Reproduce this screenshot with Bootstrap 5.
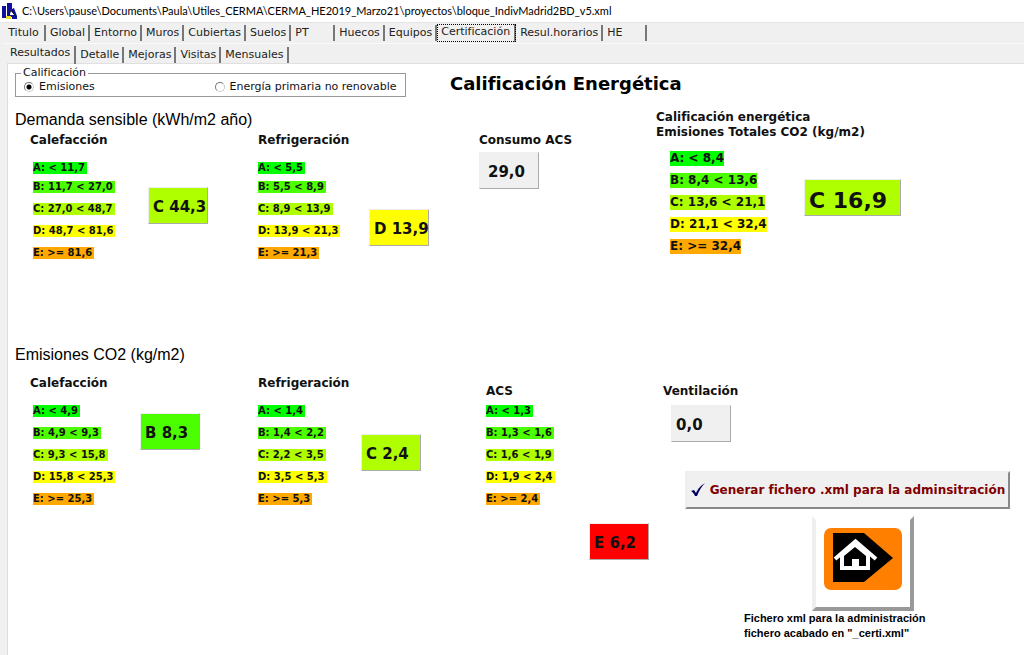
<!DOCTYPE html>
<html lang="es">
<head>
<meta charset="utf-8">
<meta name="viewport" content="width=device-width, initial-scale=1">
<title>CERMA - Certificación</title>
<link href="https://cdn.jsdelivr.net/npm/bootstrap@5.3.0/dist/css/bootstrap.min.css" rel="stylesheet">
<style>
  body { font-family: "DejaVu Sans", Verdana, sans-serif; font-size: 11px; line-height: 14px; color: #111; background: #f0f0f0; }
  .titlebar { height: 22px; background: #fff; font-family: "Lato", "Open Sans", sans-serif; font-size: 11px; color: #000; padding-left: 2px; }
  .tabstrip .tab-btn { border: 0; border-right: 2px solid #777; background: none; height: 16px; padding: 0 3px 0 4px; color: #222; line-height: 14px; white-space: nowrap; }
  .tabs-main { height: 21px; padding: 0 0 0 2px; border-top: 1px solid #e4e4e4; }
  .tabs-sub { height: 20px; margin-left: 4px; border-top: 1px solid #fafafa; padding-top: 2px; }
  .tabstrip .tab-first { min-width: 44px; }
  .tabstrip .tab-wide { min-width: 44px; text-align: left; }
  .tabstrip .tab-on { outline: 1px dotted #000; outline-offset: -1px; height: 18px; padding: 0 4px 3px 4px; }
  .tabstrip .tab-sel { height: 18px; padding: 0 4px 4px 6px; }
  .sheet { margin-left: 7px; background: #fff; border-top: 1px solid #e0e0e0; border-left: 1px solid #ddd; min-height: calc(100vh - 63px); padding-left: 7px; }
  .options { width: 391px; height: 31px; margin-top: 3px; }
  .options fieldset { border: 1px solid #999; height: 30px; padding: 0 8px; }
  .options legend { float: none; width: auto; font-size: 11px; line-height: 12px; margin: 0 0 0 -3px; padding: 0 2px; }
  .options .choice { height: 16px; }
  .options input { appearance: none; width: 10px; height: 10px; margin: 0 5px 0 0; border: 1px solid; border-color: #777 #ccc #ccc #777; border-radius: 50%; background: #fff; }
  .options input:checked { background: radial-gradient(circle, #000 0 2px, #fff 3px); }
  .main-title { font-size: 18px; line-height: 22px; font-weight: bold; color: #000; margin: 9px 0 0 44px; }
  .rating-grid { display: grid; grid-template-rows: auto 1fr; }
  .grid-demand { grid-template-columns: 243fr 221fr 177fr 368fr; min-height: 235px; margin-top: 12px; }
  .grid-emission { grid-template-columns: 243fr 228fr 177fr 361fr; }
  .section-title { grid-column: 1 / 4; font-family: "Liberation Sans", Arial, sans-serif; font-size: 16px; line-height: 20px; font-weight: normal; margin: 0; color: #000; }
  .total { grid-column: 4; grid-row: 1 / 3; }
  .grid-demand .section-title { margin-bottom: 3px; }
  .grid-emission .section-title { grid-column: 1 / -1; margin-bottom: 11px; }
  .indent { padding-left: 15px; }
  .group-title { font-size: 12px; line-height: 15px; font-weight: bold; margin: 0; }
  .scale { list-style: none; margin: 14px 0 0; padding: 0; font-size: 10px; font-weight: bold; line-height: 12px; width: 103px; flex: none; }
  .scale li { height: 22px; }
  .scale span { display: inline-block; white-space: nowrap; padding-right: 2px; }
  .scale.big { font-size: 12px; line-height: 15px; width: 118px; margin-top: 11px; }
  .scale.big span { padding-right: 0; }
  .scale.tight li:first-child { height: 19px; }
  .scale.near { margin-top: 6px; }
  .inset { padding-left: 3px; }
  .inset-total { padding-left: 14px; }
  .lv-a { background: #00ff00; } .lv-b { background: #4cff00; } .lv-c { background: #b0ff00; } .lv-d { background: #ffff00; } .lv-e { background: #ffa800; } .lv-g { background: #ff0000; }
  .result { width: 60px; height: 37px; flex: none; padding: 3px 0 0 4px; display: flex; align-items: center; font-size: 15px; font-weight: bold; white-space: nowrap; border: 1px solid; border-color: #eee #aaa #aaa #eee; }
  .result.large { width: 97px; font-size: 22px; padding-top: 7px; }
  .plain { background: #f0f0f0; }
  .raised { background: #f0f0f0; border: 2px solid; border-color: #eee #888 #888 #eee; }
  .export { width: 325px; height: 38px; font-size: 12px; font-weight: bold; color: #800000; padding: 0; margin: 29px 0 0 22px; white-space: nowrap; }
  .house { width: 102px; height: 95px; background: #fff; border: 4px solid; border-color: #fff #999 #999 #eee; padding: 0 0 10px; margin: 7px 0 0 149px; }
  .note { font-family: "Liberation Sans", Arial, sans-serif; font-size: 11px; line-height: 15px; font-weight: bold; margin: 0 0 0 81px; color: #000; }
  .gap-wide { margin-left: 12px; }
  .drop-near { margin-top: 6px; }
  .drop-b { margin-top: 22px; } .drop-c { margin-top: 39px; } .drop-c2 { margin-top: 43px; } .drop-d { margin-top: 61px; } .drop-g { margin-top: 124px; }
</style>
</head>
<body>
<header class="titlebar d-flex align-items-center">
  <svg width="16" height="18" viewBox="0 0 16 18" class="me-1 flex-shrink-0" aria-hidden="true"><path fill="#1010a0" d="M0 4h4v12H0zM5 1h5v14H5zM10 7l2-1 3 8v3h-5z"/><path fill="#fff" d="M8 8l5 5H8z"/><path stroke="#111" fill="none" d="M7 13l2-5 5 7"/><path fill="#e8dc20" d="M4 14h5v3H4z"/></svg>
  <span>C:\Users\pause\Documents\Paula\Utiles_CERMA\CERMA_HE2019_Marzo21\proyectos\bloque_IndivMadrid2BD_v5.xml</span>
</header>
<nav class="tabstrip tabs-main d-flex align-items-center" aria-label="Secciones">
  <button class="tab-btn tab-first">Titulo</button><button class="tab-btn">Global</button><button class="tab-btn">Entorno</button><button class="tab-btn">Muros</button><button class="tab-btn">Cubiertas</button><button class="tab-btn">Suelos</button><button class="tab-btn tab-wide">PT</button><button class="tab-btn">Huecos</button><button class="tab-btn">Equipos</button><button class="tab-btn tab-on" aria-current="page">Certificación</button><button class="tab-btn">Resul.horarios</button><button class="tab-btn tab-wide">HE</button>
</nav>
<nav class="tabstrip tabs-sub d-flex align-items-center" aria-label="Certificación">
  <button class="tab-btn tab-sel" aria-current="page">Resultados</button><button class="tab-btn">Detalle</button><button class="tab-btn">Mejoras</button><button class="tab-btn">Visitas</button><button class="tab-btn">Mensuales</button>
</nav>
<main class="sheet">
  <div class="d-flex align-items-start">
    <form class="options flex-shrink-0">
      <fieldset>
        <legend>Calificación</legend>
        <div class="choice d-flex">
          <label class="d-flex align-items-center col-6"><input type="radio" name="cal" checked>Emisiones</label>
          <label class="d-flex align-items-center text-nowrap ms-1"><input type="radio" name="cal">Energía primaria no renovable</label>
        </div>
      </fieldset>
    </form>
    <h1 class="main-title">Calificación Energética</h1>
  </div>

  <section class="rating-grid grid-demand">
    <h2 class="section-title">Demanda sensible (kWh/m2 año)</h2>
    <div class="indent">
      <h3 class="group-title">Calefacción</h3>
      <div class="d-flex inset">
        <ul class="scale tight"><li><span class="lv-a">A: &lt; 11,7</span></li><li><span class="lv-b">B: 11,7 &lt; 27,0</span></li><li><span class="lv-c">C: 27,0 &lt; 48,7</span></li><li><span class="lv-d">D: 48,7 &lt; 81,6</span></li><li><span class="lv-e">E: &gt;= 81,6</span></li></ul>
        <output class="result lv-c drop-c gap-wide">C 44,3</output>
      </div>
    </div>
    <div>
      <h3 class="group-title">Refrigeración</h3>
      <div class="d-flex">
        <ul class="scale tight"><li><span class="lv-a">A: &lt; 5,5</span></li><li><span class="lv-b">B: 5,5 &lt; 8,9</span></li><li><span class="lv-c">C: 8,9 &lt; 13,9</span></li><li><span class="lv-d">D: 13,9 &lt; 21,3</span></li><li><span class="lv-e">E: &gt;= 21,3</span></li></ul>
        <output class="result lv-d drop-d ms-2">D 13,9</output>
      </div>
    </div>
    <div>
      <h3 class="group-title">Consumo ACS</h3>
      <output class="result plain mt-1 ps-2">29,0</output>
    </div>
    <div class="total">
      <h3 class="group-title">Calificación energética<br>Emisiones Totales CO2 (kg/m2)</h3>
      <div class="d-flex inset-total">
        <ul class="scale big"><li><span class="lv-a">A: &lt; 8,4</span></li><li><span class="lv-b">B: 8,4 &lt; 13,6</span></li><li><span class="lv-c">C: 13,6 &lt; 21,1</span></li><li><span class="lv-d">D: 21,1 &lt; 32,4</span></li><li><span class="lv-e">E: &gt;= 32,4</span></li></ul>
        <output class="result large lv-c drop-c ms-3">C 16,9</output>
      </div>
    </div>
  </section>

  <section class="rating-grid grid-emission">
    <h2 class="section-title">Emisiones CO2 (kg/m2)</h2>
    <div class="indent">
      <h3 class="group-title">Calefacción</h3>
      <div class="d-flex inset">
        <ul class="scale"><li><span class="lv-a">A: &lt; 4,9</span></li><li><span class="lv-b">B: 4,9 &lt; 9,3</span></li><li><span class="lv-c">C: 9,3 &lt; 15,8</span></li><li><span class="lv-d">D: 15,8 &lt; 25,3</span></li><li><span class="lv-e">E: &gt;= 25,3</span></li></ul>
        <output class="result lv-b drop-b ms-1">B 8,3</output>
      </div>
    </div>
    <div>
      <h3 class="group-title">Refrigeración</h3>
      <div class="d-flex">
        <ul class="scale"><li><span class="lv-a">A: &lt; 1,4</span></li><li><span class="lv-b">B: 1,4 &lt; 2,2</span></li><li><span class="lv-c">C: 2,2 &lt; 3,5</span></li><li><span class="lv-d">D: 3,5 &lt; 5,3</span></li><li><span class="lv-e">E: &gt;= 5,3</span></li></ul>
        <output class="result lv-c drop-c2">C 2,4</output>
      </div>
    </div>
    <div class="pt-2">
      <h3 class="group-title">ACS</h3>
      <div class="d-flex">
        <ul class="scale near"><li><span class="lv-a">A: &lt; 1,3</span></li><li><span class="lv-b">B: 1,3 &lt; 1,6</span></li><li><span class="lv-c">C: 1,6 &lt; 1,9</span></li><li><span class="lv-d">D: 1,9 &lt; 2,4</span></li><li><span class="lv-e">E: &gt;= 2,4</span></li></ul>
        <output class="result lv-g drop-g">E 6,2</output>
      </div>
    </div>
    <div class="pt-2">
      <h3 class="group-title">Ventilación</h3>
      <output class="result plain drop-near ms-2">0,0</output>
      <button type="button" class="raised export d-flex align-items-center justify-content-center">
        <svg width="16" height="14" viewBox="0 0 16 14" class="me-1" aria-hidden="true"><path fill="#000060" d="M1 8l3-1 2 3C8 6 10 3 15 0 11 4 9 8 7 13H5C4 11 3 9 1 8z"/></svg>Generar fichero .xml para la adminsitración</button>
      <button type="button" class="house d-flex align-items-center justify-content-center" aria-label="Generar fichero xml">
        <svg width="78" height="62" viewBox="0 0 78 62" aria-hidden="true"><rect width="78" height="62" rx="7" fill="#ff8000"/><path d="M9 5h31l29 25-29 24H9z"/><path d="M11 31L31.500 13.500 52 31" fill="none" stroke="#fff" stroke-width="4"/><path fill="#fff" fill-rule="evenodd" d="M16 27l15-12 15 12v15H16zM20 28v10h8v-7h7v7h7V28L31 19z"/></svg>
      </button>
      <p class="note">Fichero xml para la administración<br>fichero acabado en "_certi.xml"</p>
    </div>
  </section>
</main>
<script src="https://cdn.jsdelivr.net/npm/bootstrap@5.3.0/dist/js/bootstrap.bundle.min.js"></script>
</body>
</html>
